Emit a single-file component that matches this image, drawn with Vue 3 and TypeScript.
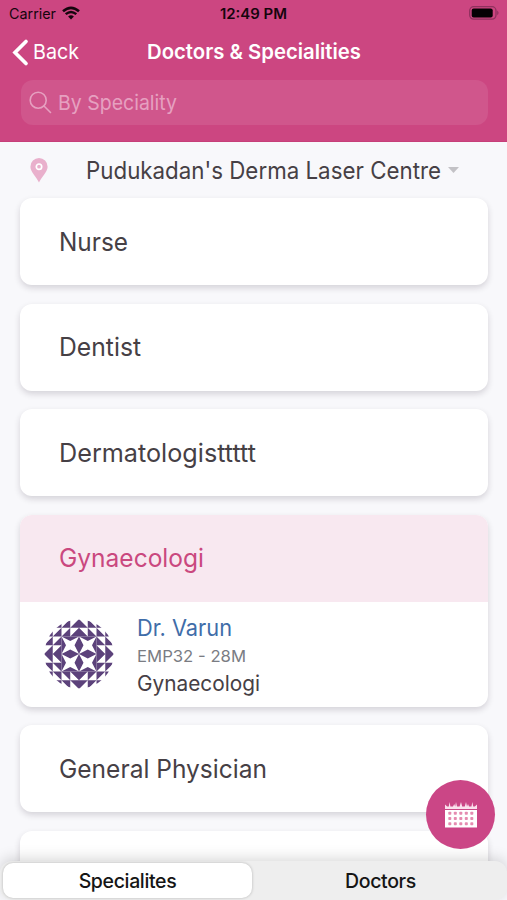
<script setup lang="ts">
interface Speciality {
  name: string
  width: number
  open?: boolean
}

const specialities: Speciality[] = [
  { name: 'Nurse', width: 69 },
  { name: 'Dentist', width: 82 },
  { name: 'Dermatologisttttt', width: 197 },
  { name: 'Gynaecologi', width: 145, open: true },
  { name: 'General Physician', width: 208 },
  { name: '', width: 0 },
]

const turns = [0, 90, 180, 270]
const columns = [0, 1, 2, 3, 4]
const rows = [0, 1, 2]
</script>

<template>
  <div class="screen">
    <header class="header">
      <div class="status">
        <div class="carrier">
          <svg class="carrier-label" width="48" height="16"><text x="0" y="13" textLength="47" lengthAdjust="spacingAndGlyphs">Carrier</text></svg>
          <svg width="18" height="14" viewBox="0 0 18 14">
            <path d="M1 5.3Q9-1.7 17 5.3" fill="none" stroke="#15050d" stroke-width="2.6" />
            <path d="M3.7 8.2Q9 3.6 14.3 8.2" fill="none" stroke="#15050d" stroke-width="2.4" />
            <path d="M6.1 10.4Q9 8 11.9 10.4L9 13.5Z" fill="#15050d" />
          </svg>
        </div>
        <svg class="clock" width="70" height="16"><text x="0" y="13" textLength="67" lengthAdjust="spacingAndGlyphs">12:49 PM</text></svg>
        <svg class="battery" width="31" height="14" viewBox="0 0 31 14">
          <rect x=".7" y=".7" width="26.3" height="12.4" rx="4" fill="none" stroke="#8f315e" stroke-width="1.3" />
          <rect x="2.7" y="2.5" width="21" height="9" rx="2" fill="#050104" />
          <path d="M28.2 4.5Q31 6.8 28.2 9.2Z" fill="#8f315e" />
        </svg>
      </div>
      <div class="nav">
        <div class="back">
          <svg width="17" height="27" viewBox="0 0 17 27"><path d="M14 2.5L3 13.5L14 24.5" fill="none" stroke="#fff" stroke-width="3.7" stroke-linecap="round" stroke-linejoin="miter" /></svg>
          <svg class="back-label" width="48" height="26"><text x="0" y="20" textLength="46" lengthAdjust="spacingAndGlyphs">Back</text></svg>
        </div>
        <svg class="title" width="216" height="28"><text x="0" y="21" textLength="214" lengthAdjust="spacingAndGlyphs">Doctors &amp; Specialities</text></svg>
      </div>
      <div class="search">
        <svg width="23" height="23" viewBox="0 0 23 23"><circle cx="9.2" cy="9.2" r="8" /><path d="M15 15L21.5 21.5" /></svg>
        <svg class="search-label" width="124" height="28"><text x="0" y="21" textLength="119" lengthAdjust="spacingAndGlyphs">By Speciality</text></svg>
      </div>
    </header>

    <main class="content">
      <div class="location">
        <svg class="pin" width="18" height="25" viewBox="0 0 18 25">
          <path d="M9 24.5C7 19.6.4 14.2.4 8.7A8.6 8.6 0 0 1 17.6 8.7C17.6 14.2 11 19.6 9 24.5Z" fill="#e9b0cc" />
          <circle cx="9" cy="8.7" r="2.7" fill="none" stroke="#fff" stroke-width="1.7" />
        </svg>
        <svg class="place" width="360" height="36"><text x="1" y="27" textLength="355" lengthAdjust="spacingAndGlyphs">Pudukadan's Derma Laser Centre</text></svg>
        <svg class="caret" width="11" height="6"><path d="M0 0H11L5.5 6Z" fill="#c3c2c6" /></svg>
      </div>
      <section v-for="(item, i) in specialities" :key="i" class="card">
        <h2 class="card-title" :class="{ selected: item.open }">
          <svg v-if="item.name" :width="item.width + 6" height="36">
            <text x="0" y="26.5" :textLength="item.width" lengthAdjust="spacingAndGlyphs">{{ item.name }}</text>
          </svg>
        </h2>
        <div v-if="item.open" class="doctor">
          <svg class="avatar" width="70" height="70" viewBox="0 0 70 70">
            <defs>
              <clipPath id="avatar-circle"><circle cx="35" cy="35" r="34.6" /></clipPath>
              <path id="avatar-triangles" d="M8.75 0V8.75H0ZM17.5 0V8.75H8.75ZM8.75 8.75V17.5H0ZM17.5 8.75V17.5H8.75Z" />
            </defs>
            <g clip-path="url(#avatar-circle)" fill="#5c427b">
              <g v-for="turn in turns" :key="turn" :transform="`rotate(${turn} 35 35)`">
                <use href="#avatar-triangles" />
                <use href="#avatar-triangles" x="17.5" y="0" />
                <use href="#avatar-triangles" x="0" y="17.5" />
                <path d="M17.5 17.5H35L26.25 22ZM17.5 17.5L22 26.25L17.5 35ZM35 17.5L30.5 26.25L35 35ZM17.5 35L26.25 30.5L35 35Z" />
              </g>
            </g>
          </svg>
          <div class="details">
            <svg class="name" width="100" height="28"><text x="0" y="21" textLength="95" lengthAdjust="spacingAndGlyphs">Dr. Varun</text></svg>
            <svg class="code" width="115" height="24"><text x="0" y="18.5" textLength="109" lengthAdjust="spacingAndGlyphs">EMP32 - 28M</text></svg>
            <svg class="role" width="126" height="30"><text x="0" y="24" textLength="123" lengthAdjust="spacingAndGlyphs">Gynaecologi</text></svg>
          </div>
        </div>
      </section>
    </main>

    <button class="calendar" aria-label="Calendar">
      <svg width="34" height="28" viewBox="0 0 34 28">
        <path d="M1 9H33V26.5H1Z" fill="#fff" />
        <path d="M1 3.5L3.2 5.5H4.8L5.6 1L6.4 5.5H9L10.2 3L11.2 5.5L12 1L13 5.5H15.6L17 1L18.2 5.5H20.8L22 1L23 5.5L24 3L25 5.5H27.4L28.4 1L29.2 5.5H30.8L33 3.5V8H1Z" fill="#fae1ed" />
        <g fill="#e58bb0">
          <template v-for="row in rows" :key="row">
            <rect v-for="col in columns" :key="col" :x="4.3 + col * 5.5" :y="10.8 + row * 5.2" width="3" height="3" rx=".8" />
          </template>
        </g>
      </svg>
    </button>
    <nav class="tabs">
      <button class="tab active">Specialites</button>
      <button class="tab">Doctors</button>
    </nav>
  </div>
</template>

<style>
body {
  background: #f8f8fb;
}
</style>

<style scoped>
.screen {
  position: relative;
  width: 507px;
  height: 900px;
  overflow: hidden;
  background: #f8f8fb;
  color: #464045;
  font-family: Inter, "Liberation Sans", sans-serif;
}
svg {
  display: block;
  flex: none;
  overflow: visible;
}
text {
  fill: currentColor;
}
.header {
  height: 142px;
  box-sizing: border-box;
  background: #cc4681;
  border-bottom: 1px solid #c73f79;
}
.status {
  display: grid;
  grid-template-columns: 1fr 70px 1fr;
  height: 29px;
  padding: 6px 7px 0 9px;
  box-sizing: border-box;
  color: #15050d;
}
.carrier {
  display: flex;
  gap: 5px;
}
.carrier-label {
  font-size: 14.5px;
}
.clock {
  font-size: 14.5px;
  font-weight: 600;
}
.battery {
  justify-self: end;
}
.nav {
  display: flex;
  align-items: center;
  height: 46px;
  color: #fff;
}
.back {
  display: flex;
  align-items: center;
  width: 135px;
  padding-left: 12px;
  gap: 4px;
}
.back-label {
  font-size: 20.5px;
}
.title {
  font-size: 20.5px;
  font-weight: 600;
}
.search {
  display: flex;
  align-items: center;
  gap: 6px;
  height: 45px;
  margin: 5px 19px 0 21px;
  padding-left: 8px;
  box-sizing: border-box;
  border-radius: 12px;
  background: #d0568c;
  color: #e6a0c0;
}
.search circle,
.search path {
  fill: none;
  stroke: currentColor;
  stroke-width: 1.6;
  stroke-linecap: round;
}
.search-label {
  font-size: 20.5px;
}
.content {
  display: flex;
  flex-direction: column;
  gap: 18.5px;
  padding: 0 19px 0 20px;
}
.location {
  display: flex;
  align-items: center;
  height: 56px;
  margin-bottom: -18.5px;
  padding-left: 10px;
}
.place {
  margin-left: 37px;
  font-size: 24px;
}
.caret {
  margin-left: 2.5px;
}
.card {
  flex: none;
  overflow: hidden;
  border-radius: 12px;
  background: #fff;
  box-shadow: 0 3px 6px rgba(30, 20, 35, 0.16);
}
.card-title {
  display: flex;
  align-items: center;
  height: 87px;
  box-sizing: border-box;
  margin: 0;
  padding: 0 0 0 39px;
  font-size: 25.5px;
  font-weight: 400;
}
.selected {
  background: #f8e8f0;
  color: #ca487f;
}
.doctor {
  display: flex;
  align-items: center;
  height: 105px;
  padding-left: 24px;
}
.details {
  display: flex;
  flex-direction: column;
  margin-left: 23px;
  padding-top: 3px;
}
.name {
  font-size: 22.5px;
  color: #3f6da9;
}
.code {
  font-size: 16.5px;
  color: #7a7c83;
}
.role {
  font-size: 21.5px;
}
.calendar {
  position: absolute;
  right: 12px;
  bottom: 51px;
  display: grid;
  place-items: center;
  width: 69px;
  height: 69px;
  padding: 0;
  border: 0;
  border-radius: 50%;
  background: #cb4686;
  z-index: 2;
}
.tabs {
  position: absolute;
  right: 0;
  bottom: 0;
  left: 0;
  display: grid;
  grid-template-columns: 249px 1fr;
  height: 39px;
  padding: 2px 0 2px 3px;
  box-sizing: border-box;
  border-radius: 12px;
  background: #eee;
  box-shadow: 0 -3px 14px rgba(0, 0, 0, 0.15);
}
.tab {
  padding: 0 0 0 2px;
  border: 0;
  border-radius: 10px;
  background: transparent;
  color: #151515;
  font-family: inherit;
  font-size: 19.5px;
  font-weight: 500;
  letter-spacing: -0.35px;
}
.active {
  padding: 0;
  background: #fff;
  box-shadow: 0 0 3px rgba(0, 0, 0, 0.25);
}
</style>
